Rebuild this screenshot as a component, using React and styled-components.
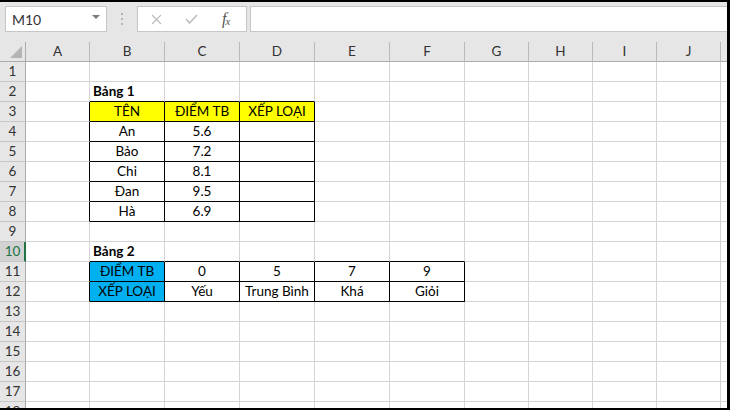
import React from 'react'
import styled, { createGlobalStyle } from 'styled-components'

const GlobalStyle = createGlobalStyle`
	html, body {
		margin: 0;
		padding: 0;
		background: #fff;
	}
	body {
		font-family: Lato, "Liberation Sans", sans-serif;
	}
`;

const Frame = styled.div`
	width: 730px;
	height: 410px;
	box-sizing: border-box;
	border-top: 2px solid #000;
	border-right: 3px solid #000;
	border-bottom: 2px solid #000;
	background: #e6e6e6;
	display: flex;
	flex-direction: column;
	overflow: hidden;
`;

const Toolbar = styled.div`
	height: 40px;
	flex: none;
	box-sizing: border-box;
	padding: 4px 0 0 5px;
	display: flex;
	align-items: flex-start;
`;

const NameBox = styled.div`
	width: 102px;
	height: 26px;
	box-sizing: border-box;
	border: 1px solid #c6c6c6;
	background: #fff;
	display: flex;
	align-items: center;
	justify-content: space-between;
	padding: 0 6px 0 6px;
	font-size: 14px;
	color: #333;
`;

const Caret = styled.span`
	width: 0;
	height: 0;
	border-left: 4px solid transparent;
	border-right: 4px solid transparent;
	border-top: 4px solid #7a7a7a;
	margin-top: -5px;
`;

const Dots = styled.div`
	width: 30px;
	height: 26px;
	display: flex;
	flex-direction: column;
	align-items: center;
	justify-content: center;
	gap: 3px;

	span {
		width: 2px;
		height: 2px;
		background: #b4b4b4;
	}
`;

const FormulaButtons = styled.div`
	width: 110px;
	height: 26px;
	box-sizing: border-box;
	border: 1px solid #c6c6c6;
	background: #fff;
	display: flex;
	align-items: center;
	padding-left: 13px;
	gap: 23px;
`;

const Fx = styled.span`
	font-family: "Liberation Serif", serif;
	font-style: italic;
	font-size: 16px;
	color: #555;
	margin-left: 1px;
	letter-spacing: -1px;

	sub {
		font-size: 11px;
		vertical-align: baseline;
		position: relative;
		top: 1px;
	}
`;

const FormulaInput = styled.div`
	flex: 1;
	height: 26px;
	box-sizing: border-box;
	margin-left: 3px;
	border: 1px solid #c6c6c6;
	border-right: none;
	background: #fff;
`;

const Sheet = styled.div`
	flex: 1;
	min-height: 0;
	display: grid;
	grid-template-columns: 26px 64px repeat(5, 75px) repeat(4, 64px) 1fr;
	grid-auto-rows: 20px;
	background: #fff;
	overflow: hidden;
	font-size: 13.5px;
	line-height: 19px;
`;

const Corner = styled.div`
	position: relative;
	box-sizing: border-box;
	background: #e6e6e6;
	border-right: 1px solid #ababab;
	border-bottom: 1px solid #ababab;

	&::after {
		content: "";
		position: absolute;
		right: 3px;
		bottom: 3px;
		border-left: 12px solid transparent;
		border-bottom: 12px solid #b4b4b4;
	}
`;

const ColHead = styled.div`
	box-sizing: border-box;
	background: #e6e6e6;
	border-right: 1px solid #bababa;
	border-bottom: 1px solid #ababab;
	text-align: center;
	color: #333;
`;

const RowHead = styled.div`
	box-sizing: border-box;
	background: ${p => p.$active ? '#d2d2d2' : '#e6e6e6'};
	border-right: ${p => p.$active ? '2px solid #217346' : '1px solid #ababab'};
	border-bottom: 1px solid #c6c6c6;
	text-align: center;
	color: ${p => p.$active ? '#217346' : '#333'};
	padding-left: ${p => p.$active ? '1px' : '0'};
`;

const Cell = styled.div`
	box-sizing: border-box;
	background: ${p => p.$bg || '#fff'};
	border-right: 1px solid ${p => p.$rb ? '#000' : '#d4d4d4'};
	border-bottom: 1px solid ${p => p.$bb ? '#000' : '#d4d4d4'};
	padding: 0 3px;
	text-align: ${p => p.$bold ? 'left' : 'center'};
	font-weight: ${p => p.$bold ? 700 : 400};
	color: #000;
	white-space: nowrap;
`;

const COLS = ['A', 'B', 'C', 'D', 'E', 'F', 'G', 'H', 'I', 'J', '']
const ROWS = 18
const YELLOW = '#ffff00'
const BLUE = '#00b0f0'

// row -> { colIndex: [text, background] }
const cells = {
	2: { 1: ['Bảng 1'] },
	3: { 1: ['TÊN', YELLOW], 2: ['ĐIỂM TB', YELLOW], 3: ['XẾP LOẠI', YELLOW] },
	4: { 1: ['An'], 2: ['5.6'] },
	5: { 1: ['Bảo'], 2: ['7.2'] },
	6: { 1: ['Chi'], 2: ['8.1'] },
	7: { 1: ['Đan'], 2: ['9.5'] },
	8: { 1: ['Hà'], 2: ['6.9'] },
	10: { 1: ['Bảng 2'] },
	11: { 1: ['ĐIỂM TB', BLUE], 2: ['0'], 3: ['5'], 4: ['7'], 5: ['9'] },
	12: { 1: ['XẾP LOẠI', BLUE], 2: ['Yếu'], 3: ['Trung Bình'], 4: ['Khá'], 5: ['Giỏi'] },
}

function boxed(r, c) {
	if (r >= 3 && r <= 8 && c >= 1 && c <= 3) return true;
	if (r >= 11 && r <= 12 && c >= 1 && c <= 5) return true;
	return false;
}

function CrossIcon() {
	return (
		<svg width="11" height="11" viewBox="0 0 11 11">
			<path d="M1 1 L10 10 M10 1 L1 10" stroke="#bdbdbd" strokeWidth="1.3" fill="none" />
		</svg>
	);
}

function CheckIcon() {
	return (
		<svg width="13" height="10" viewBox="0 0 13 10">
			<path d="M1 5 L4.5 9 L12 1" stroke="#bdbdbd" strokeWidth="1.6" fill="none" />
		</svg>
	);
}

export default function App() {
	const rows = [];
	for (let r = 1; r <= ROWS; r++) {
		rows.push(
			<RowHead key={`h${r}`} $active={r === 10}>{r}</RowHead>
		);
		COLS.forEach((_, c) => {
			const data = cells[r] && cells[r][c];
			const text = data ? data[0] : '';
			const bold = text.startsWith('Bảng');
			rows.push(
				<Cell
					key={`${r}-${c}`}
					$bg={data && data[1]}
					$bold={bold}
					$rb={boxed(r, c) || boxed(r, c + 1)}
					$bb={boxed(r, c) || boxed(r + 1, c)}
				>
					{text}
				</Cell>
			);
		});
	}

	return (
		<>
			<GlobalStyle />
			<Frame>
				<Toolbar>
					<NameBox>
						M10
						<Caret />
					</NameBox>
					<Dots><span /><span /><span /></Dots>
					<FormulaButtons>
						<CrossIcon />
						<CheckIcon />
						<Fx>f<sub>x</sub></Fx>
					</FormulaButtons>
					<FormulaInput />
				</Toolbar>
				<Sheet>
					<Corner />
					{COLS.map((name, i) => (
						<ColHead key={i}>{name}</ColHead>
					))}
					{rows}
				</Sheet>
			</Frame>
		</>
	);
}
